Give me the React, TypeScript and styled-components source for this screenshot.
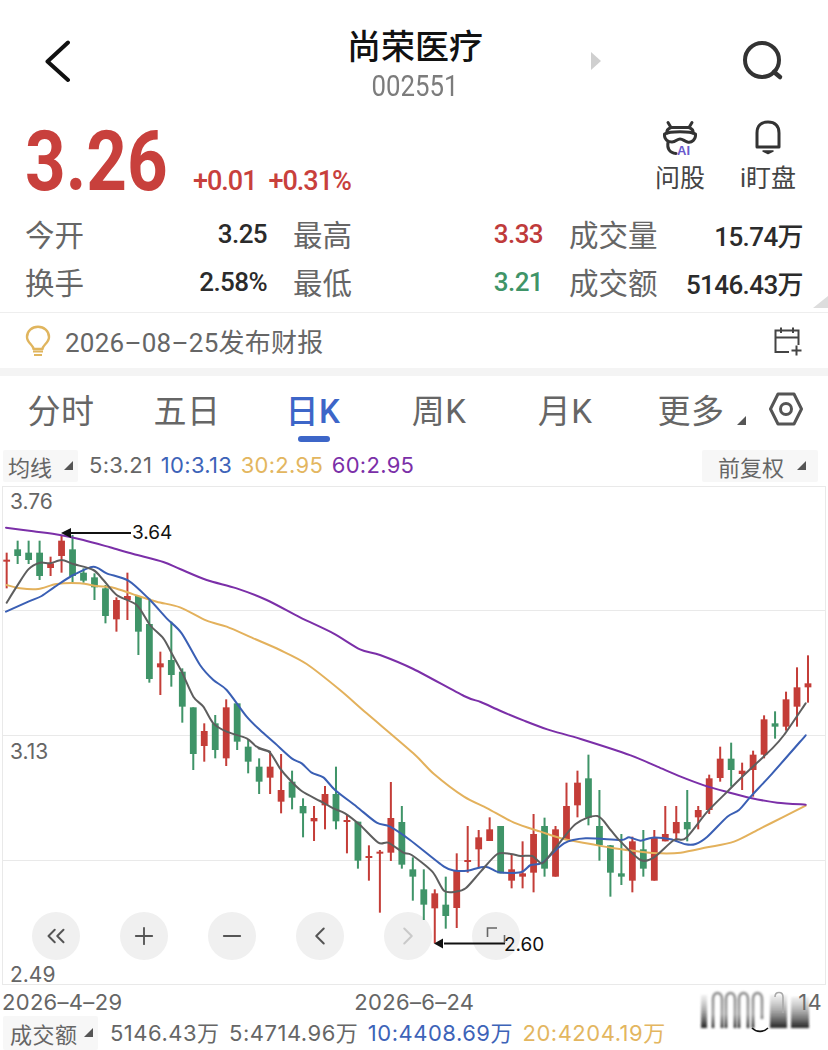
import React from 'react';
import styled, { createGlobalStyle } from 'styled-components';
import { ChevronsLeft, Plus, Minus, ChevronLeft, ChevronRight } from 'lucide-react';

const Global = createGlobalStyle`
  html, body { margin: 0; padding: 0; background: #fff; }
  body { font-family: Roboto, "Noto Sans CJK SC", sans-serif; }
  * { box-sizing: border-box; }
`;

const UI = `Roboto, "Noto Sans CJK SC", sans-serif`;
const PLAIN = `Inter, "Noto Sans CJK SC", sans-serif`;
const RED = '#c8403c';
const GREEN = '#3f9468';
const GREY = '#666';
const BLUE = '#3d63b8';
const YELLOW = '#e3b660';
const PURPLE = '#7b2fa8';

const Root = styled.div`
  position: relative;
  width: 828px;
  height: 1050px;
  overflow: hidden;
  display: flex;
  flex-direction: column;
  background: #fff;
  font-family: ${UI};
`;

const Header = styled.header`
  height: 120px;
  display: grid;
  grid-template-columns: 347px 136px 345px;
  align-items: start;
`;
const BackCell = styled.div`
  padding: 40px 0 0 44px;
`;
const TitleCell = styled.div`
  display: flex;
  flex-direction: column;
  align-items: center;
  padding-top: 27px;
`;
const Title = styled.h1`
  margin: 0;
  font-size: 34px;
  line-height: 40px;
  font-weight: 500;
  color: #111;
  white-space: nowrap;
`;
const Code = styled.div`
  font-size: 29px;
  line-height: 34px;
  color: #7c7c7c;
  transform: scaleX(0.89);
  margin-top: 2px;
`;
const HeaderRight = styled.div`
  display: flex;
  padding: 40px 0 0 107px;
  gap: 139px;
`;
const HintWrap = styled.div`
  padding-top: 11px;
`;

const PriceRow = styled.section`
  height: 91px;
  display: flex;
  align-items: baseline;
  padding-left: 25px;
`;
const Price = styled.div`
  width: 168px;
  font-size: 84px;
  line-height: 84px;
  font-weight: 700;
  color: ${RED};
  transform: scaleX(0.845);
  transform-origin: left center;
`;
const Change = styled.span`
  font-size: 27px;
  font-weight: 500;
  letter-spacing: -1px;
  color: ${RED};
  margin-right: 12px;
`;
const Actions = styled.div`
  margin-left: auto;
  align-self: flex-start;
  display: flex;
  padding: 0 16px 0 0;
`;
const Action = styled.div`
  width: 88px;
  display: flex;
  flex-direction: column;
  align-items: center;
  color: #444;
  font-size: 25px;
  line-height: 34px;
`;
const ActionIcon = styled.div`
  height: 42px;
`;

const StatGrid = styled.section`
  display: grid;
  grid-template-columns: 242px 250px 234px;
  grid-auto-rows: 48px;
  column-gap: 26px;
  padding: 0 25px;
`;
const Stat = styled.div`
  display: flex;
  align-items: center;
  justify-content: space-between;
  padding-bottom: 2px;
`;
const StatLabel = styled.span`
  font-size: 29.5px;
  color: ${GREY};
  margin-bottom: 3px;
`;
const StatValue = styled.span<{ $color?: string }>`
  font-size: 26px;
  font-weight: 500;
  letter-spacing: -0.6px;
  color: ${p => p.$color || '#2b2b2b'};
`;
const StatsWrap = styled.div`
  position: relative;
  height: 101px;
`;
const Corner = styled.div`
  position: absolute;
  right: 0;
  bottom: 4px;
  width: 15px;
  height: 12px;
  background: #ddd;
  clip-path: polygon(100% 0, 100% 100%, 0 100%);
`;

const Notice = styled.section`
  height: 56px;
  border-top: 1px solid #eee;
  display: flex;
  align-items: center;
  padding: 0 25px;
  gap: 14px;
`;
const NoticeText = styled.span`
  font-size: 26px;
  letter-spacing: 0.25px;
  color: ${GREY};
  flex: 1;
`;
const Band = styled.div`
  height: 8px;
  background: #f4f4f4;
`;

const Tabs = styled.nav`
  height: 66px;
  display: flex;
  align-items: center;
  margin-left: -2px;
`;
const Tab = styled.div<{ $active?: boolean }>`
  position: relative;
  width: 126px;
  height: 66px;
  display: flex;
  align-items: center;
  justify-content: center;
  font-size: 33px;
  padding-bottom: 1px;
  letter-spacing: 0.5px;
  font-weight: ${p => (p.$active ? 500 : 400)};
  color: ${p => (p.$active ? '#3d66c8' : GREY)};
  &::after {
    content: '';
    display: ${p => (p.$active ? 'block' : 'none')};
    position: absolute;
    left: 48px;
    bottom: 0;
    width: 32px;
    height: 6px;
    border-radius: 3px;
    background: #3d66c8;
  }
`;
const Caret = styled.i`
  display: inline-block;
  width: 9px;
  height: 9px;
  background: #555;
  clip-path: polygon(100% 0, 100% 100%, 0 100%);
`;
const TabCaret = styled(Caret)`
  position: absolute;
  right: 8px;
  bottom: 17px;
`;
const HexWrap = styled.div`
  margin-left: 15px;
  height: 36px;
`;

const SubRow = styled.section`
  height: 44px;
  display: flex;
  align-items: center;
  padding: 3px 10px 0 3px;
  font-family: ${PLAIN};
  font-size: 22px;
`;
const Pill = styled.div<{ $w: number }>`
  width: ${p => p.$w}px;
  height: 32px;
  display: flex;
  align-items: center;
  justify-content: space-between;
  padding: 0 5px 0 5px;
  background: #f7f7f7;
  border-radius: 2px;
  color: ${GREY};
  font-size: 22px;
`;
const MaList = styled.div`
  display: flex;
  gap: 8.5px;
  margin: 0 0 2px 11px;
  letter-spacing: 0.3px;
`;
const MaItem = styled.span<{ $c: string }>`
  color: ${p => p.$c};
  white-space: nowrap;
`;
const AdjustPill = styled(Pill)`
  margin-left: auto;
  padding: 0 12px 0 16px;
`;

const ChartBox = styled.section`
  position: relative;
  height: 499px;
`;
const ChartSvg = styled.svg`
  position: absolute;
  left: 0;
  top: 0;
  display: block;
`;
const AxisLabel = styled.span<{ $top: number }>`
  position: absolute;
  left: 10px;
  top: ${p => p.$top}px;
  font-family: ${PLAIN};
  font-size: 21px;
  line-height: 26px;
  color: ${GREY};
`;
const ExtremeLabel = styled.span<{ $left: number; $top: number }>`
  position: absolute;
  left: ${p => p.$left}px;
  top: ${p => p.$top}px;
  font-family: ${PLAIN};
  font-size: 19px;
  line-height: 24px;
  color: #111;
`;
const ZoomBar = styled.div`
  position: absolute;
  left: 32px;
  top: 426px;
  display: flex;
  gap: 40px;
`;
const ZoomButton = styled.div<{ $muted?: boolean }>`
  width: 48px;
  height: 48px;
  border-radius: 50%;
  background: #f0f0f0;
  display: flex;
  align-items: center;
  justify-content: center;
  color: ${p => (p.$muted ? '#c9c9c9' : '#555')};
`;

const DateRow = styled.div`
  position: relative;
  height: 30px;
  display: flex;
  align-items: center;
  padding: 3px 6px 0 2px;
  font-family: ${PLAIN};
  font-size: 22px;
  letter-spacing: 0.3px;
  color: ${GREY};
`;
const MidDate = styled.span`
  margin-left: 232px;
`;
const EndDate = styled.span`
  margin-left: auto;
`;
const Smear = styled.svg`
  position: absolute;
  left: 695px;
  top: -2px;
`;

const VolumeRow = styled.section`
  height: 35px;
  display: flex;
  align-items: center;
  padding-left: 3px;
  font-family: ${PLAIN};
  font-size: 22px;
  letter-spacing: 0.5px;
`;
const VolumePill = styled(Pill)`
  height: 34px;
  padding: 0 5px 0 7px;
  margin-right: 12px;
`;
const VolumeList = styled.div`
  display: flex;
  gap: 9.5px;
  margin-bottom: 4px;
`;

type Candle = ['r' | 'g', number, number, number, number];

const z3 = (y: number) => 490 + y / 3;
const z7 = (y: number) => 730 + y / 3;
const z4 = (y: number) => 640 + y / 3;

const g3: Candle[] = [
  ['r', 188, 295, 209, 213], ['g', 152, 222, 178, 198], ['g', 152, 222, 188, 210], ['g', 152, 270, 188, 258],
  ['r', 200, 258, 220, 234], ['r', 135, 248, 152, 198], ['g', 135, 280, 178, 258], ['g', 235, 278, 248, 272],
  ['g', 250, 330, 262, 292], ['g', 285, 400, 295, 378], ['r', 322, 425, 330, 388], ['r', 248, 390, 318, 330],
  ['g', 318, 495, 318, 425], ['g', 325, 578, 402, 567], ['r', 485, 615, 520, 532], ['g', 395, 590, 510, 555],
  ['g', 535, 698, 545, 650], ['g', 652, 840, 652, 792], ['r', 700, 815, 723, 768], ['g', 675, 805, 700, 780],
  ['r', 628, 828, 652, 805], ['g', 640, 780, 640, 755],
];
const g7: Candle[] = [
  ['g', 30, 130, 50, 95], ['g', 85, 192, 110, 155], ['r', 65, 192, 110, 143], ['r', 72, 250, 180, 215],
  ['g', 122, 238, 155, 203], ['g', 205, 322, 228, 250], ['r', 228, 333, 264, 274], ['r', 168, 298, 192, 226],
  ['g', 110, 298, 192, 274], ['r', 255, 370, 270, 276], ['g', 275, 416, 275, 392], ['r', 346, 452, 378, 384],
  ['r', 360, 548, 365, 371], ['r', 156, 393, 264, 368], ['g', 228, 416, 276, 404], ['g', 382, 512, 418, 440],
  ['g', 418, 570, 478, 524], ['r', 478, 640, 490, 535], ['g', 440, 596, 524, 558],
];
const g4: Candle[] = [
  ['r', 640, 864, 690, 804], ['r', 558, 698, 660, 666], ['r', 570, 685, 592, 628], ['r', 532, 603, 568, 603],
  ['g', 558, 700, 558, 700], ['r', 645, 745, 688, 722], ['r', 604, 745, 700, 710], ['r', 522, 757, 582, 698],
  ['g', 533, 710, 558, 686], ['r', 558, 710, 568, 710], ['r', 428, 600, 498, 600], ['r', 392, 532, 428, 496],
  ['g', 344, 556, 415, 533], ['g', 450, 662, 558, 616], ['g', 615, 770, 616, 698], ['g', 582, 735, 700, 710],
  ['r', 590, 757, 604, 722], ['g', 570, 710, 628, 686], ['r', 570, 722, 593, 722], ['r', 498, 604, 582, 604],
  ['r', 498, 604, 546, 580], ['g', 450, 604, 546, 568], ['r', 498, 568, 510, 532], ['r', 404, 522, 415, 510],
  ['r', 320, 425, 356, 414], ['g', 308, 440, 356, 390], ['r', 368, 450, 392, 402], ['r', 332, 470, 344, 390],
  ['r', 226, 355, 238, 344], ['g', 214, 296, 250, 260], ['r', 155, 272, 178, 260], ['r', 82, 260, 142, 200],
  ['r', 46, 188, 130, 142],
];
const toReal = (list: Candle[], f: (y: number) => number): Candle[] =>
  list.map(([c, h, l, t, b]) => [c, f(h), f(l), f(t), f(b)]);
const candles: Candle[] = [...toReal(g3, z3), ...toReal(g7, z7), ...toReal(g4, z4)];
const candleX = (i: number) => 6.67 + 10.977 * i;

type Pt = [number, number];
const zx3 = (p: number[]): Pt => [p[0] / 3, z3(p[1])];
const zx7 = (p: number[]): Pt => [230 + p[0] / 3, z7(p[1])];
const zx4 = (p: number[]): Pt => [414 + p[0] / 3, z4(p[1])];

// Catmull-Rom through the sampled points, so the averages read as curves
const smooth = (pts: Pt[]) => {
  let d = `M${pts[0][0]} ${pts[0][1]}`;
  for (let i = 0; i < pts.length - 1; i++) {
    const a = pts[Math.max(i - 1, 0)];
    const b = pts[i];
    const c = pts[i + 1];
    const e = pts[Math.min(i + 2, pts.length - 1)];
    const k = 0.14;
    d += `C${b[0] + (c[0] - a[0]) * k} ${b[1] + (c[1] - a[1]) * k} ${c[0] - (e[0] - b[0]) * k} ${c[1] - (e[1] - b[1]) * k} ${c[0]} ${c[1]}`;
  }
  return d;
};

const purple = smooth([
  ...[[18,113],[100,124],[180,135],[250,150],[330,172],[400,192],[490,216],[540,237],[620,270],[710,295],[800,330],[900,382],[1000,430],[1080,478],[1140,495],[1240,537]].map(zx3),
  ...[[150,168],[200,186],[260,213],[330,242],[400,268],[500,297],[650,346],[730,380],[800,410],[870,436],[940,456],[1010,474],[1090,488],[1175,494]].map(zx4),
]);
const yellow = smooth([
  ...[[20,285],[60,295],[115,297],[170,282],[240,280],[290,288],[340,293],[400,313],[470,335],[540,352],[620,392],[680,410],[760,445],[840,480],[920,522],[1020,600],[1100,670],[1240,790]].map(zx3),
  ...[[60,402],[150,470],[220,505],[300,548],[380,575],[450,597],[530,612],[600,625],[680,635],[740,640],[800,638],[880,622],[960,605],[1040,565],[1110,530],[1175,497]].map(zx4),
]);
const grey = smooth([
  ...[[20,338],[50,290],[85,238],[120,218],[150,220],[185,210],[220,222],[280,240],[310,270],[350,315],[410,345],[450,405],[490,445],[515,490],[545,545],[580,620],[610,650],[640,700],[680,725],[740,745],[770,770],[810,785]].map(zx3),
  ...[[85,55],[120,68],[150,115],[180,150],[215,183],[270,213],[310,235],[345,250],[390,285],[445,338],[475,338],[520,368],[545,375]].map(zx7),
  ...[[55,695],[90,752],[125,755],[155,745],[200,695],[250,642],[290,642],[320,648],[355,648],[385,670],[420,630],[485,552],[550,528],[590,570],[620,605],[680,660],[720,652],[780,600],[815,595],[880,515],[940,455],[990,405],[1075,325],[1110,285],[1175,190]].map(zx4),
]);
const blue = smooth([
  ...[[18,365],[85,335],[125,318],[165,290],[220,255],[280,230],[320,250],[385,272],[445,325],[500,385],[545,430],[600,525],[640,570],[680,600],[740,680]].map(zx3),
  ...[[90,0],[135,40],[185,85],[215,100],[245,128],[280,142],[315,180],[380,230],[440,278],[480,290],[540,330]].map(zx7),
  ...[[90,680],[125,692],[160,692],[215,680],[255,697],[320,697],[350,675],[385,668],[450,610],[515,595],[620,600],[645,592],[680,602],[715,593],[770,598],[815,613],[845,612],[880,590],[940,530],[975,510],[1010,470],[1075,400],[1175,286]].map(zx4),
]);

const Chart = () => (
  <ChartSvg width={828} height={499} viewBox="0 486 828 499">
    <g fill="none" stroke="#e9e9e9" strokeWidth="1">
      <rect x="2.5" y="486.5" width="823" height="498" />
      <path d="M3 610.5H825M3 735.5H825M3 860.5H825" />
    </g>
    {candles.map(([c, h, l, t, b], i) => {
      const x = candleX(i);
      const color = c === 'r' ? '#c43d38' : GREEN;
      return (
        <g key={i} fill={color}>
          <rect x={x - 1} y={h} width={2} height={l - h} />
          <rect x={x - 3.4} y={t} width={6.8} height={Math.max(b - t, 2)} />
        </g>
      );
    })}
    <g fill="none" strokeWidth="2" strokeLinejoin="round" strokeLinecap="round">
      <path d={yellow} stroke="#e3b15c" />
      <path d={purple} stroke="#7b2fa8" />
      <path d={blue} stroke="#3a5fb4" />
      <path d={grey} stroke="#5e5e5e" />
    </g>
    <path d="M70 533H131" stroke="#111" strokeWidth="2" />
    <path d="M61 533L71 528V538Z" fill="#111" />
    <path d="M444 943.5H505" stroke="#111" strokeWidth="2" />
    <path d="M434 943.5L443 938.5V948.5Z" fill="#111" />
    <path d="M487.5 937V928H497M504.5 935V943" fill="none" stroke="#666" strokeWidth="1.6" />
  </ChartSvg>
);

const BackIcon = () => (
  <svg width="28" height="44" viewBox="0 0 28 44">
    <path d="M24 2.5L3.5 21.5L24 40" fill="none" stroke="#111" strokeWidth="4" strokeLinecap="round" strokeLinejoin="round" />
  </svg>
);
const ForwardHint = () => (
  <svg width="12" height="20" viewBox="0 0 12 20">
    <path d="M1 1L11 10L1 19Z" fill="#cfcfcf" />
  </svg>
);
const SearchIcon = () => (
  <svg width="44" height="42" viewBox="0 0 44 42">
    <circle cx="21" cy="20" r="17" fill="none" stroke="#333" strokeWidth="4" />
    <path d="M33 32L39 37" stroke="#333" strokeWidth="4.5" strokeLinecap="round" />
  </svg>
);
const CowIcon = () => (
  <svg width="36" height="36" viewBox="0 0 36 36">
    <g fill="none" stroke="#333" strokeWidth="3" strokeLinecap="round" strokeLinejoin="round">
      <path d="M6 2.5L9 7.5H27L30 2.5" />
      <path d="M9 7.5C5.5 9 4.5 11 5 13M27 7.5C30.5 9 31.5 11 31 13" />
      <path d="M2.5 14C8 11 28 11 33.5 14C34 19.5 30 23 25.5 22C22 21 21 19 18 19C15 19 14 22 10 22C6 22 2 19.5 2.5 14Z" />
      <path d="M6 22C5 28 7 33 14 33.5" />
    </g>
    <text x="15" y="34.5" fontFamily="Liberation Sans, sans-serif" fontSize="13" fontWeight="700" fill="#6a5acd">AI</text>
  </svg>
);
const BellIcon = () => (
  <svg width="30" height="36" viewBox="0 0 30 36">
    <path d="M4 27V13C4 6 8 2 15 2C22 2 26 6 26 13V27Z" fill="none" stroke="#333" strokeWidth="3" strokeLinejoin="round" />
    <path d="M10 31H20L15 33.5Z" fill="#333" stroke="#333" strokeWidth="1.5" strokeLinejoin="round" />
  </svg>
);
const BulbIcon = () => (
  <svg width="26" height="32" viewBox="0 0 26 32">
    <path d="M8.5 24C8.5 20 2 18 2 12C2 6 7 1.8 13 1.8C19 1.8 24 6 24 12C24 18 17.5 20 17.5 24Z" fill="none" stroke="#e0b55e" strokeWidth="2.4" strokeLinejoin="round" />
    <path d="M8 26.5H18M9 30H17" stroke="#e0b55e" strokeWidth="2.2" />
  </svg>
);
const CalendarIcon = () => (
  <svg width="30" height="30" viewBox="0 0 30 30">
    <path d="M16 26H2.5V4.5H25.5V19M2.5 11.5H25.5M8 1.5V7M20 1.5V7" fill="none" stroke="#444" strokeWidth="2" />
    <path d="M18.5 24.5H28.5M23.5 19.5V29.5" fill="none" stroke="#444" strokeWidth="2" />
  </svg>
);
const HexIcon = () => (
  <svg width="34" height="36" viewBox="0 0 34 36">
    <path d="M9 3H25L32.5 18L25 33H9L1.5 18Z" fill="none" stroke="#555" strokeWidth="3" strokeLinejoin="round" />
    <circle cx="17" cy="18" r="5.5" fill="none" stroke="#555" strokeWidth="3" />
  </svg>
);
const SmearMark = () => (
  <Smear width="125" height="50" viewBox="0 0 125 50">
    <defs>
      <linearGradient id="arch" x1="0" y1="0" x2="0" y2="1">
        <stop offset="0" stopColor="#8a8a8a" />
        <stop offset="0.6" stopColor="#9a9a9a" />
        <stop offset="1" stopColor="#222" />
      </linearGradient>
      <linearGradient id="block" x1="0" y1="0" x2="0" y2="1">
        <stop offset="0" stopColor="#999" stopOpacity="0.15" />
        <stop offset="1" stopColor="#222" />
      </linearGradient>
      <filter id="soft"><feGaussianBlur stdDeviation="0.8" /></filter>
    </defs>
    <g filter="url(#soft)">
      <rect x="6" y="12" width="6" height="33" fill="url(#block)" />
      {[18, 31, 44, 58].map(x => (
        <path key={x} d={`M${x} 45V16C${x} 8 ${x + 9} 8 ${x + 9} 16V${x === 58 ? 36 : 45}`} fill="none" stroke="url(#arch)" strokeWidth="2.6" />
      ))}
      <rect x="75" y="12" width="17" height="33" fill="url(#block)" />
      <rect x="96" y="14" width="18" height="31" fill="url(#block)" />
    </g>
    <path d="M80 14C80 8 88 8 88 14V30" fill="none" stroke="#aaa" strokeWidth="1.6" />
    <path d="M57 45C62 50 69 49 73 45" fill="none" stroke="#111" strokeWidth="1.6" />
  </Smear>
);

const App = () => (
  <Root>
    <Global />
    <Header>
      <BackCell><BackIcon /></BackCell>
      <TitleCell>
        <Title>尚荣医疗</Title>
        <Code>002551</Code>
      </TitleCell>
      <HeaderRight>
        <HintWrap><ForwardHint /></HintWrap>
        <SearchIcon />
      </HeaderRight>
    </Header>

    <PriceRow>
      <Price>3.26</Price>
      <Change>+0.01</Change>
      <Change>+0.31%</Change>
      <Actions>
        <Action><ActionIcon><CowIcon /></ActionIcon>问股</Action>
        <Action><ActionIcon><BellIcon /></ActionIcon>i盯盘</Action>
      </Actions>
    </PriceRow>

    <StatsWrap>
      <StatGrid>
        <Stat><StatLabel>今开</StatLabel><StatValue>3.25</StatValue></Stat>
        <Stat><StatLabel>最高</StatLabel><StatValue $color="#bf3b3b">3.33</StatValue></Stat>
        <Stat><StatLabel>成交量</StatLabel><StatValue>15.74万</StatValue></Stat>
        <Stat><StatLabel>换手</StatLabel><StatValue>2.58%</StatValue></Stat>
        <Stat><StatLabel>最低</StatLabel><StatValue $color={GREEN}>3.21</StatValue></Stat>
        <Stat><StatLabel>成交额</StatLabel><StatValue>5146.43万</StatValue></Stat>
      </StatGrid>
      <Corner />
    </StatsWrap>

    <Notice>
      <BulbIcon />
      <NoticeText>2026–08–25发布财报</NoticeText>
      <CalendarIcon />
    </Notice>
    <Band />

    <Tabs>
      <Tab>分时</Tab>
      <Tab>五日</Tab>
      <Tab $active>日K</Tab>
      <Tab>周K</Tab>
      <Tab>月K</Tab>
      <Tab>更多<TabCaret /></Tab>
      <HexWrap><HexIcon /></HexWrap>
    </Tabs>

    <SubRow>
      <Pill $w={75}>均线<Caret /></Pill>
      <MaList>
        <MaItem $c={GREY}>5:3.21</MaItem>
        <MaItem $c={BLUE}>10:3.13</MaItem>
        <MaItem $c={YELLOW}>30:2.95</MaItem>
        <MaItem $c={PURPLE}>60:2.95</MaItem>
      </MaList>
      <AdjustPill $w={116}>前复权<Caret /></AdjustPill>
    </SubRow>

    <ChartBox>
      <ZoomBar>
        <ZoomButton><ChevronsLeft size={30} strokeWidth={1.6} /></ZoomButton>
        <ZoomButton><Plus size={28} strokeWidth={1.6} /></ZoomButton>
        <ZoomButton><Minus size={28} strokeWidth={1.6} /></ZoomButton>
        <ZoomButton><ChevronLeft size={30} strokeWidth={1.6} /></ZoomButton>
        <ZoomButton $muted><ChevronRight size={30} strokeWidth={1.6} /></ZoomButton>
        <ZoomButton />
      </ZoomBar>
      <Chart />
      <AxisLabel $top={3}>3.76</AxisLabel>
      <AxisLabel $top={253}>3.13</AxisLabel>
      <AxisLabel $top={476}>2.49</AxisLabel>
      <ExtremeLabel $left={132} $top={35}>3.64</ExtremeLabel>
      <ExtremeLabel $left={504} $top={447}>2.60</ExtremeLabel>
    </ChartBox>

    <DateRow>
      <span>2026–4–29</span>
      <MidDate>2026–6–24</MidDate>
      <EndDate>14</EndDate>
      <SmearMark />
    </DateRow>

    <VolumeRow>
      <VolumePill $w={95}>成交额<Caret /></VolumePill>
      <VolumeList>
        <MaItem $c={GREY}>5146.43万</MaItem>
        <MaItem $c={GREY}>5:4714.96万</MaItem>
        <MaItem $c={BLUE}>10:4408.69万</MaItem>
        <MaItem $c={YELLOW}>20:4204.19万</MaItem>
      </VolumeList>
    </VolumeRow>
  </Root>
);

export default App;
